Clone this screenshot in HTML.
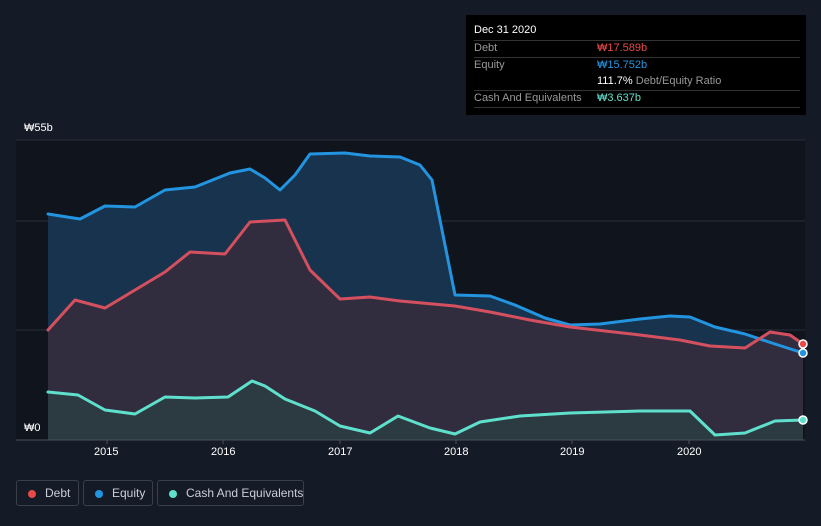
<!DOCTYPE html><html><head><style>
html,body{margin:0;width:821px;height:526px;overflow:hidden}
body{background:#151b26;font-family:"Liberation Sans",sans-serif;position:relative}
.t{position:absolute;color:#fff;font-size:11px}
.leg{position:absolute;top:480px;height:26px;border:1px solid #3a404b;border-radius:3px;color:#ccd;font-size:12px;line-height:25px;box-sizing:border-box;white-space:nowrap}
.leg i{position:absolute;left:11px;top:9px;width:8px;height:8px;border-radius:50%}
.tt div{position:absolute;white-space:nowrap}
</style></head><body>
<svg width="821" height="526" style="position:absolute;left:0;top:0">
<rect x="16" y="140" width="789" height="300" fill="#0f141d"/>
<line x1="16" y1="140" x2="805" y2="140" stroke="#2a303a"/>
<line x1="16" y1="221" x2="805" y2="221" stroke="#2a303a"/>
<line x1="16" y1="330" x2="805" y2="330" stroke="#2a303a"/>
<polygon fill="#18334d" points="48,214 80,219 105,206 135,207 165,190 195,187 230,173 250,169 265,178 280,190 295,175 310,154 345,153 370,156 400,157 420,165 432,180 455,295 490,296 515,305 545,318 570,325 600,324 640,319 670,316 690,317 715,327 745,334 775,344 803,353 803,440 48,440"/>
<polygon fill="#322c3f" points="48,330 75,300 105,308 135,290 165,272 190,252 225,254 250,222 285,220 310,270 340,299 370,297 400,301 455,306 490,312 530,320 570,327 640,335 680,340 710,346 745,348 770,332 790,335 803,344 803,440 48,440"/>
<polygon fill="#2c3a42" points="48,392 78,395 105,410 135,414 165,397 195,398 228,397 252,381 265,386 285,399 315,411 340,426 370,433 398,416 430,428 455,434 480,422 520,416 570,413 640,411 690,411 715,435 745,433 775,421 803,420 803,440 48,440"/>
<g fill="none" stroke-width="3" stroke-linejoin="round" stroke-linecap="round">
<polyline stroke="#2394df" points="48,214 80,219 105,206 135,207 165,190 195,187 230,173 250,169 265,178 280,190 295,175 310,154 345,153 370,156 400,157 420,165 432,180 455,295 490,296 515,305 545,318 570,325 600,324 640,319 670,316 690,317 715,327 745,334 775,344 803,353"/>
<polyline stroke="#d4505f" points="48,330 75,300 105,308 135,290 165,272 190,252 225,254 250,222 285,220 310,270 340,299 370,297 400,301 455,306 490,312 530,320 570,327 640,335 680,340 710,346 745,348 770,332 790,335 803,344"/>
<polyline stroke="#5fe0cc" points="48,392 78,395 105,410 135,414 165,397 195,398 228,397 252,381 265,386 285,399 315,411 340,426 370,433 398,416 430,428 455,434 480,422 520,416 570,413 640,411 690,411 715,435 745,433 775,421 803,420"/>
</g>
<circle cx="803" cy="344" r="4" fill="#e84a4a" stroke="#fff" stroke-width="1.5"/>
<circle cx="803" cy="353" r="4" fill="#2394df" stroke="#fff" stroke-width="1.5"/>
<circle cx="803" cy="420" r="4" fill="#5fe0cc" stroke="#fff" stroke-width="1.5"/>
<line x1="16" y1="440" x2="805" y2="440" stroke="#4a505a"/>
<g stroke="#4a505a"><line x1="107" y1="440" x2="107" y2="444"/><line x1="223" y1="440" x2="223" y2="444"/><line x1="340" y1="440" x2="340" y2="444"/><line x1="456" y1="440" x2="456" y2="444"/><line x1="572" y1="440" x2="572" y2="444"/><line x1="689" y1="440" x2="689" y2="444"/></g>
</svg>
<div class="t" style="left:24px;top:122px">₩55b</div>
<div class="t" style="left:24px;top:422px">₩0</div>
<div class="t" style="left:94px;top:446px">2015</div>
<div class="t" style="left:211px;top:446px">2016</div>
<div class="t" style="left:328px;top:446px">2017</div>
<div class="t" style="left:444px;top:446px">2018</div>
<div class="t" style="left:560px;top:446px">2019</div>
<div class="t" style="left:677px;top:446px">2020</div>
<div class="tt" style="position:absolute;left:466px;top:15px;width:340px;height:100px;background:#000;font-size:11px;color:#999">
<div style="left:8px;top:9px;color:#fff">Dec 31 2020</div>
<div style="left:8px;right:6px;top:25px;border-top:1px solid #333"></div>
<div style="left:8px;top:27px">Debt</div><div style="left:131px;top:27px;color:#e84a4a">₩17.589b</div>
<div style="left:8px;right:6px;top:42px;border-top:1px solid #333"></div>
<div style="left:8px;top:44px">Equity</div><div style="left:131px;top:44px;color:#2394df">₩15.752b</div>
<div style="left:131px;top:60px"><span style="color:#fff">111.7%</span> Debt/Equity Ratio</div>
<div style="left:8px;right:6px;top:75px;border-top:1px solid #333"></div>
<div style="left:8px;top:77px">Cash And Equivalents</div><div style="left:131px;top:77px;color:#5fe0cc">₩3.637b</div>
<div style="left:8px;right:6px;top:92px;border-top:1px solid #333"></div>
</div>
<div class="leg" style="left:16px;width:63px"><i style="background:#e84a4a"></i><span style="position:absolute;left:28px">Debt</span></div>
<div class="leg" style="left:83px;width:70px"><i style="background:#2394df"></i><span style="position:absolute;left:28px">Equity</span></div>
<div class="leg" style="left:157px;width:147px"><i style="background:#5fe0cc"></i><span style="position:absolute;left:28px">Cash And Equivalents</span></div>
</body></html>
